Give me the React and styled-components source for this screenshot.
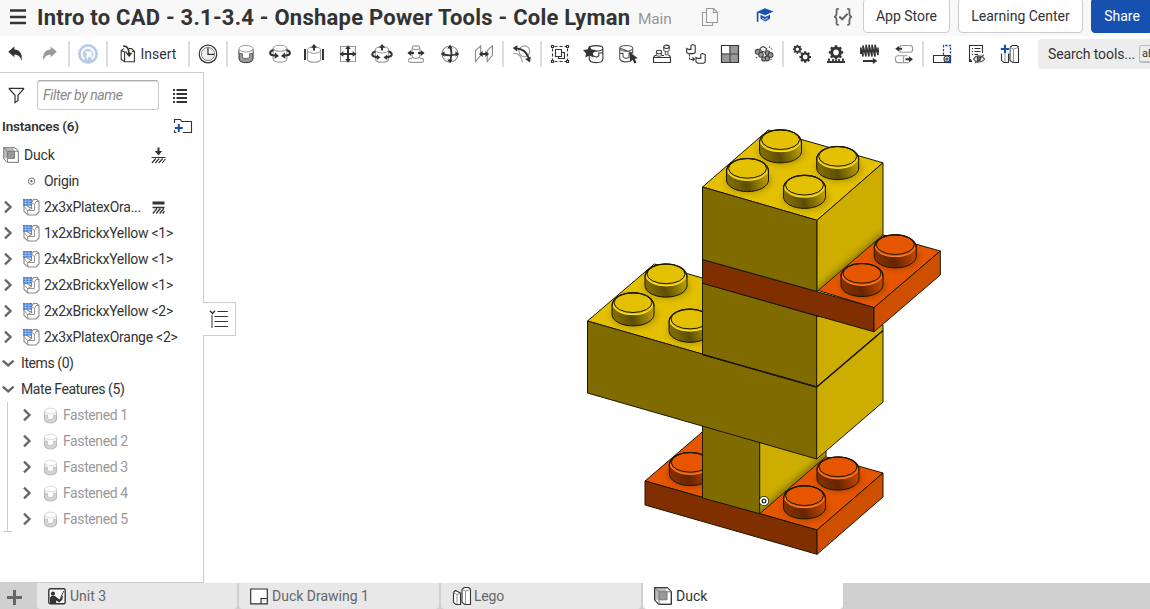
import React from "react";
import styled, { createGlobalStyle } from "styled-components";

const ink = "#333";
const blue = "#1651b0";

const GlobalStyle = createGlobalStyle`
  * { box-sizing: border-box; }
  body { margin: 0; overflow: hidden; background: #fff; }
`;

const Page = styled.div`
  width: 1150px;
  height: 609px;
  display: flex;
  flex-direction: column;
  overflow: hidden;
  background: #fff;
  color: ${ink};
  font-family: Roboto, "Liberation Sans", sans-serif;
  font-size: 14px;
`;

const Label = styled.span`
  white-space: pre;
  letter-spacing: ${(p) => p.$ls || 0}px;
  line-height: 20px;
`;

const Svg = styled.svg`
  display: block;
  flex: none;
  overflow: visible;
`;

/* ---------- header ---------- */
const Header = styled.header`
  display: flex;
  height: 36px;
  flex: none;
  background: #f8f8f8;
  padding-left: 10px;
`;
const MenuButton = styled.div`
  width: 27px;
  flex: none;
  padding-top: 9px;
`;
const Title = styled.h1`
  margin: 0;
  width: 601px;
  flex: none;
  white-space: pre;
  font-size: 22px;
  font-weight: 700;
  line-height: 35px;
  letter-spacing: ${(p) => p.$ls}px;
`;
const Branch = styled.div`
  width: 63px;
  flex: none;
  color: #999;
  font-size: 15.5px;
  line-height: 39px;
  letter-spacing: -0.2px;
`;
const HeaderIcon = styled.div`
  width: ${(p) => p.$w}px;
  flex: none;
  padding-top: 7px;
`;
const HeaderButton = styled.button`
  flex: none;
  width: ${(p) => p.$w}px;
  height: 35px;
  margin: -2px 8px 0 0;
  padding: 1px 0 0;
  border: 1px solid ${(p) => (p.$primary ? blue : "#ccc")};
  border-radius: 4px;
  background: ${(p) => (p.$primary ? blue : "#fff")};
  color: ${(p) => (p.$primary ? "#fff" : ink)};
  font: inherit;
  letter-spacing: ${(p) => p.$ls || 0}px;
  text-align: center;
`;

/* ---------- toolbar ---------- */
const Toolbar = styled.div`
  display: flex;
  align-items: center;
  height: 36px;
  flex: none;
`;
const Tool = styled.div`
  width: ${(p) => p.$w || 34}px;
  padding-left: ${(p) => p.$pl || 0}px;
  flex: none;
  display: flex;
  justify-content: center;
  align-items: center;
  gap: 5px;
`;
const Divider = styled.div`
  width: 2px;
  height: 26px;
  margin: 0 1px;
  flex: none;
  background: #ddd;
`;
const Search = styled.div`
  display: flex;
  align-items: center;
  gap: 4px;
  width: 130px;
  height: 30px;
  margin-left: 11px;
  padding-left: 10px;
  flex: none;
  border-radius: 4px;
  background: #ededed;
`;
const Key = styled.span`
  flex: none;
  width: 40px;
  height: 18px;
  padding-left: 2px;
  border: 1px solid #bbb;
  border-bottom-width: 2px;
  border-radius: 3px;
  font-size: 11px;
  line-height: 16px;
`;

/* ---------- body ---------- */
const Body = styled.div`
  display: flex;
  height: 511px;
  flex: none;
`;
const Panel = styled.aside`
  position: relative;
  width: 204px;
  flex: none;
  border: 1px solid #ccc;
  border-left: 0;
`;
const FilterRow = styled.div`
  display: flex;
  align-items: center;
  height: 44px;
  padding-left: 8px;
`;
const FilterInput = styled.div`
  width: 122px;
  height: 30px;
  margin: 0 13px 0 12px;
  padding: 0 5px;
  border: 1px solid #ccc;
  border-top-color: #aaa;
  border-radius: 3px;
  box-shadow: inset 0 1px 1px #ddd;
  color: #888;
  font-style: italic;
  line-height: 29px;
  letter-spacing: ${(p) => p.$ls}px;
`;
const GroupHeading = styled.div`
  display: flex;
  justify-content: space-between;
  height: 25px;
  padding: 0 11px 8px 2px;
  align-items: center;
  font-weight: 600;
  font-size: 13.5px;
`;
const Row = styled.div`
  display: flex;
  align-items: center;
  height: 26px;
  padding-left: ${(p) => p.$indent}px;
  color: ${(p) => (p.$muted ? "#999" : ink)};
`;
const Slot = styled.div`
  width: ${(p) => p.$w}px;
  flex: none;
`;
const MateList = styled.div`
  position: relative;
  height: 130px;
  &::before {
    content: "";
    position: absolute;
    left: 7px;
    top: 0;
    width: 1px;
    height: 130px;
    background: #ccc;
  }
  &::after {
    content: "";
    position: absolute;
    left: 3px;
    top: 129px;
    width: 9px;
    height: 1px;
    background: #ccc;
  }
`;
const PanelToggle = styled.div`
  position: absolute;
  left: 203px;
  top: 229px;
  width: 33px;
  height: 34px;
  border: 1px solid #ccc;
  border-left: 0;
  background: #fff;
  padding: 6px 0 0 6px;
`;
const Viewport = styled.main`
  flex: 1;
  padding: 48px 0 0 376px;
`;

/* ---------- tabs ---------- */
const Tabs = styled.footer`
  display: flex;
  height: 26px;
  flex: none;
  background: #d0d0d0;
`;
const AddTab = styled.div`
  width: 37px;
  flex: none;
  padding: 7px 0 0 7px;
`;
const Tab = styled.div`
  display: flex;
  align-items: center;
  gap: ${(p) => p.$gap || 4}px;
  width: 200px;
  margin-right: 2px;
  padding-left: 11px;
  flex: none;
  border-radius: 0 0 4px 4px;
  background: ${(p) => (p.$active ? "#fff" : "#e8e8e8")};
  color: ${(p) => (p.$active ? ink : "#666")};
`;

/* ---------- icons ---------- */
const Icon = ({ children, w = 20, h = 20, c = ink, sw = 1.1 }) => (
  <Svg width={w} height={h} viewBox={`0 0 ${w} ${h}`} fill="none" stroke={c} strokeWidth={sw}>
    {children}
  </Svg>
);

const Undo = ({ flip, c = ink }) => (
  <Icon>
    <path
      transform={flip ? "translate(20 0) scale(-1 1)" : undefined}
      d="M3.2 7.7 9.4 2.6V5.6C14.6 5.9 17.6 9.3 16.6 16.8 15.4 12.3 13 10.6 9.4 10.4V13.2Z"
      fill={c}
      stroke="none"
    />
  </Icon>
);
const Sync = () => (
  <Icon>
    <circle cx="10" cy="10" r="10" fill="#b9cde8" stroke="none" />
    <path d="M6.4 15.2A6.3 6.3 0 1 1 13.8 15.1" stroke="#fff" strokeWidth="1.8" />
    <path d="M6.6 7.4 13.8 7.6 13.6 14.6 11.3 12.2C10 13 9.6 14 9.4 16 7.9 13.6 8.2 11.4 9 9.9Z" fill="#fff" stroke="none" />
  </Icon>
);
const InsertIcon = () => (
  <Icon w={16} h={18}>
    <path d="M4 3.6 1.2 5.6V14.4L4.6 16.8H14.4V6.4L11.6 3.6H9M1.2 5.6 4.6 7V16.8M4.6 7H7" />
    <path d="M14.4 6.4H12" />
    <path d="M3.2 1.2C7.6 1 8.8 3.4 9 9" strokeWidth="1.7" />
    <path d="M5.6 7.8H12.4L9.2 12.2Z" fill={ink} stroke="none" />
  </Icon>
);
const Clock = () => (
  <Icon>
    <circle cx="10" cy="10" r="8.8" strokeWidth="1.2" />
    <circle cx="10" cy="10" r="6.6" fill="#eee" stroke="#777" strokeWidth=".9" />
    <path d="M10 3.8V10.4H16.2" fill="#fff" strokeWidth="1.3" />
  </Icon>
);
const Fasten = ({ s = 20, faint }) => (
  <Svg width={s} height={s} viewBox="0 0 20 20" fill="none" stroke={ink} opacity={faint ? 0.42 : 1}>
    <path d="M3 7V14.8C3 20 17 20 17 14.8V7L14 9.6C13 10 13.6 13.4 12 13.6H8C6.6 13.4 7 10 6 9.6Z" fill="#999" stroke="#333" />
    <path d="M3 5V9.6H6.3V13.4C8 15 12 15 13.7 13.4V9.6H17V5" fill="#fff" stroke="#666" />
    <ellipse cx="10" cy="4.7" rx="7" ry="3.3" fill="#fff" stroke="#999" />
  </Svg>
);
const AU = "M10 0 6.9 3.8H9V6.4H11V3.8H13.1Z";
const Revolute = () => (
  <Icon c="#999">
    <ellipse cx="10" cy="4.3" rx="6.8" ry="3" />
    <path d="M3.2 4.3V15.2C4 19.2 16 19.2 16.8 15.2V4.3" />
    <path d="M3.4 6C-1 7.4-.8 10.6 3 11.2L6 11.6M16.6 6C21 7.4 20.8 10.6 17 11.2L14 11.6" stroke={ink} strokeWidth="2" />
    <path d="M5 8.5 9 11.9 4.6 14.7ZM15 8.5 11 11.9 15.4 14.7Z" fill={ink} stroke="none" />
  </Icon>
);
const Slider = () => (
  <Icon c="#999">
    <ellipse cx="10" cy="6" rx="6.6" ry="3.2" />
    <path d="M3.4 6V15.3C4.2 19.2 15.8 19.2 16.6 15.3V6" />
    <path d={AU} fill={ink} stroke="none" />
    <path d="M1 5V16M19 5V16" stroke={ink} strokeWidth="2" />
  </Icon>
);
const Planar = () => (
  <Icon c="#999">
    <path d="M2.5 2.5H17.5V17.5H2.5Z" />
    <path d="M10 3V17M3 10H17" stroke={ink} strokeWidth="2" />
    <path d="M10 1.2 7.2 5H12.8ZM10 18.8 7.2 15H12.8ZM1.4 10 5.4 7.2V12.8ZM18.6 10 14.6 7.2V12.8Z" fill={ink} stroke="none" />
  </Icon>
);
const Cylindrical = () => (
  <Icon c="#999">
    <ellipse cx="10" cy="5.8" rx="6.6" ry="3.2" />
    <path d="M3.4 6V15.3C4.2 19.2 15.8 19.2 16.6 15.3V6" />
    <path d={AU} fill={ink} stroke="none" />
    <path d="M3.4 7.5C-.7 8.6-.7 12 3 12.8L6 13.2M16.6 7.5C20.7 8.6 20.7 12 17 12.8L14 13.2" stroke={ink} strokeWidth="2" />
    <path d="M4.8 10.4 8.6 13.5 4.6 16ZM15.2 10.4 11.4 13.5 15.4 16Z" fill={ink} stroke="none" />
  </Icon>
);
const PinSlot = () => (
  <Icon c="#999">
    <ellipse cx="10" cy="3.8" rx="3.8" ry="1.9" />
    <path d="M6.2 4V12.6C7 15 13 15 13.8 12.6V4M6.2 14.4H4C1.8 14.8 1.8 18.4 4.4 18.4H15.6C18.4 18.4 18.4 14.8 15.8 14.4H13.8" />
    <path d="M4 9H8M12 9H16" stroke={ink} strokeWidth="2" />
    <path d="M1.3 9 5.2 6V12ZM18.7 9 14.8 6V12Z" fill={ink} stroke="none" />
  </Icon>
);
const Ball = () => (
  <Icon c="#888">
    <circle cx="10" cy="10" r="8" />
    <path d="M10 3C12 7 11.4 13 10 17M3 10.2C7 11.6 13 11.6 17 10" stroke={ink} strokeWidth="1.8" />
    <path d="M10 .8 7.2 4.4H12.8ZM10 19.2 7.2 15.6H12.8ZM.8 10 4.5 7.2V12.8ZM19.2 10 15.5 7.2V12.8Z" fill={ink} stroke="none" />
  </Icon>
);
const Parallel = () => (
  <Icon c="#888">
    <path d="M1.5 6.7 6.7 1.8V11.4L1.5 17.5ZM13.2 6.7 18.4 1.8V11.4L13.2 17.5Z" />
    <path d="M7 10H13" stroke={ink} strokeWidth="2" />
    <path d="M4.9 10 8.7 6.9V13.1ZM15.1 10 11.3 6.9V13.1Z" fill={ink} stroke="none" />
  </Icon>
);
const Tangent = () => (
  <Icon c="#999">
    <circle cx="12.4" cy="7.3" r="5.4" />
    <path d="M1 9C7 9.4 10 12.4 10.4 18.4" />
    <path d="M4 4.6C10 4.5 14.6 8.5 16.8 14" stroke={ink} strokeWidth="2" />
    <path d="M.7 4 5.4 1.2 5.1 7.4ZM18 18.4 13.1 14.9 18.8 12.8Z" fill={ink} stroke="none" />
  </Icon>
);
const Group = () => (
  <Icon>
    <path d="M4.5 2.5H16M4.5 17.5H16M2.5 4.5V16M17.5 4.5V16" strokeDasharray="3 2" />
    <path d="M1.5 1.5h2v2h-2zM16.5 1.5h2v2h-2zM1.5 16.5h2v2h-2zM16.5 16.5h2v2h-2z" fill="#fff" />
    <path d="M5.5 5.5H11.5V12.5H5.5Z" />
    <path d="M11.5 8.5H14.5V14.5H8.5V12.5" />
  </Icon>
);
const StarCylinder = () => (
  <Icon>
    <path d="M5.3 4V15.2C6 19.7 18.3 19.7 18.9 15.2V4C18.3.8 6 .8 5.3 4ZM5.3 5C8 7.8 16.4 7.8 18.9 5M18.5 9H14.8V11.8L12.6 13.2 9 11.8" fill="#fff" />
    <path d="M5.4 1.4 7.4 5.4 12 6 8.9 9.2 9.6 13.6 5.4 11.5 1.3 13.6 2 9.2-1 6 3.5 5.4Z" fill={ink} stroke="none" />
  </Icon>
);
const SelectCylinder = () => (
  <Icon c="#555">
    <path d="M1.7 4V14.4C2.4 18 8 18.6 12 17M14.7 9V4C14 .6 2.4.6 1.7 4ZM1.7 5C4 7.8 12.4 7.8 14.7 5M1.7 9.4H5V12.6C6.4 14.4 9 14.6 11 13.6V9.4H14" />
    <path d="M11.3 7.8 19.8 14.2 16.7 14.9 18.6 18.4 16.4 19.4 14.5 15.8 12.2 18.2Z" fill={ink} stroke="none" />
  </Icon>
);
const MateConnector = () => (
  <Icon>
    <path d="M4.6 11.5H3L1.5 13.5V18.5H18.5V13.5L17.4 11.5H16.4M9.6 11.5H12M1.5 13.5H18.5" />
    <ellipse cx="7" cy="8" rx="2.6" ry="1.8" />
    <path d="M4.4 8V11C5 12.6 9 12.6 9.6 11V8M11.7 3V6.3C12.6 8.2 16.3 8.2 17.3 6.3V3M13.3 8V10.8H16V8" stroke="#666" />
    <ellipse cx="14.5" cy="2.8" rx="2.8" ry="1.7" />
  </Icon>
);
const Replicate = () => (
  <Icon>
    <path d="M.7 4.4 2.7 5.4H5V1.3L6.6.6 9.2 1.6V8.5L7.7 9.6H2.4L.7 8.4ZM10 13.4 12 14.4H14.8V10.3L16.4 9.6 19.2 10.6V18L17.7 19.3H11.8L10 18Z" />
    <path d="M3.5 10.5V15.5H8" strokeDasharray="2 1" />
    <path d="M6.5 12.8 9.3 15.3 6.5 17.6Z" fill={ink} stroke="none" />
  </Icon>
);
const PatternGrid = () => (
  <Icon>
    <path d="M1.5 1.5H18.5V18.5H1.5Z" fill="#999" />
    <path d="M2 2H9.5V9.5H2Z" fill="#fff" stroke="none" />
    <path d="M10 1.5V18.5M1.5 10H18.5" stroke="#444" />
    <path d="M1.5 1.5H18.5V18.5H1.5Z" />
  </Icon>
);
const PatternCircle = () => (
  <Icon c="#444">
    <g fill="#999">
      <circle cx="3.7" cy="7.8" r="2.4" /><circle cx="7" cy="10.8" r="2.4" />
      <circle cx="13" cy="14.5" r="2.4" /><circle cx="9.7" cy="15" r="2" />
      <circle cx="13.6" cy="9" r="2.3" /><circle cx="16.5" cy="11" r="2.4" />
    </g>
    <path d="M6 4.5 9 2.4 12.6 4.4 11.5 8.3 7.6 7.2Z" fill="#fff" />
    <path d="M2 13 4 15.4M15 2.5 18 5.4M16.5 16 18.6 14" strokeDasharray="1.5 1.5" />
  </Icon>
);
const gear = (cx, cy, r, n) =>
  Array.from({ length: n }, (_, i) => {
    const a = (i * 2 * Math.PI) / n;
    return (
      <line key={i} x1={cx + Math.cos(a) * r} y1={cy + Math.sin(a) * r} x2={cx + Math.cos(a) * (r + 2)} y2={cy + Math.sin(a) * (r + 2)} />
    );
  });
const Gears = () => (
  <Icon>
    <circle cx="5.4" cy="5.3" r="2.6" strokeWidth="1.7" />
    <g strokeWidth="1.7">{gear(5.4, 5.3, 2.5, 8)}</g>
    <circle cx="13.2" cy="13" r="3.5" strokeWidth="2.2" />
    <g strokeWidth="2.2">{gear(13.2, 13, 3.8, 8)}</g>
  </Icon>
);
const RackPinion = () => (
  <Icon>
    <circle cx="10" cy="8.4" r="4.3" strokeWidth="3" />
    <g strokeWidth="2.5">{gear(10, 8.4, 5.2, 8)}</g>
    <path d="M1 18H19" strokeWidth="2" />
    <path d="M3 17V14.5M7 17V15M10 17V16M13 17V15M17 17V14.5" strokeWidth="1.8" />
  </Icon>
);
const Screw = () => (
  <Icon>
    <path d="M.8 10V3.5L3 12.6V1.5L6 12.6V.8L9 12.6V.8L12 12.6V.8L15 12.6V.8L18 11V3.5M.5 7H19" strokeWidth="1.5" />
    <path d="M3 17H14" strokeWidth="2" />
    <path d="M12.8 13.8 17.3 17 12.8 20Z" fill={ink} stroke="none" />
  </Icon>
);
const Linear = () => (
  <Icon c="#999">
    <path d="M7 1.5H16.3C19.5 1.8 19.5 8 16.3 8.3H5.5M7 1.5C5 2 5 7.8 7 8.3M13.5 11.8H3.5C.7 12.2.7 18.2 3.5 18.6H14.5M10.5 11.8C8.8 13 8.8 17.4 10.5 18.6" />
    <path d="M4 4.8H8M11.5 15.2H16" stroke={ink} strokeWidth="2" />
    <path d="M1.2 4.8 5 2V7.6ZM19 15.2 15 12.2V18.2Z" fill={ink} stroke="none" />
  </Icon>
);
const Section = () => (
  <Icon>
    <path d="M1.5 11.5H18.5V18.5H1.5Z" />
    <path d="M11.5 11V1.5H18.5V18.5H14" stroke={blue} strokeWidth="1.3" strokeDasharray="2.4 1.3" />
    <circle cx="15" cy="15" r="3" />
    <circle cx="15" cy="15" r="1" />
  </Icon>
);
const HiddenList = () => (
  <Icon>
    <path d="M6 17.5H3.5V1.5H16.5V9M3.5 15 6 17.5" />
    <path d="M6 4.5H7M8.5 4.5H14.5M6 7.5H7M8.5 7.5H14.5M6 10.5H7M8.5 10.5H12" />
    <path d="M7.6 15C10 10.8 16 10.8 18.6 15 16 19 10 19 7.6 15ZM9 19 18 10.7M11 19 16 12" stroke="#555" />
    <circle cx="13" cy="14.8" r="1.8" fill="#777" />
  </Icon>
);
const Books = ({ plus }) => (
  <Icon c={ink}>
    <path d="M1.5 6.5 3.5 4.5 8.5 7V18.5H4L1.5 16.6ZM10 3.5 12.2 1.5H16.6L18.5 3V18.5H13L10 16.5Z" fill="#fff" />
    <path d="M1.5 6.5 5 8.5V18M5 8.5 8.5 7.2M10 3.5 13.5 5 18.5 3.5M13.5 5V18.2" stroke="#888" strokeWidth=".9" />
    {plus && (
      <>
        <path d="M0 0H9.5V9.5H0Z" fill="#fff" stroke="none" />
        <path d="M5 .8V9.2M.8 5H9.2" stroke={blue} strokeWidth="2.2" />
      </>
    )}
  </Icon>
);
const CapIcon = () => (
  <Icon w={18} h={18} c={blue}>
    <path d="M8.8 1.3 17.5 4.5 9.2 8.3.6 4.9Z" fill={blue} stroke="none" />
    <path d="M1.6 5V14.8" strokeWidth="1.7" />
    <path d="M4.5 7.8 9.2 10 14 7.8V11.7L9.3 14.6 4.5 11.7Z" fill={blue} stroke="none" />
    <path d="M6 11.2 9 12.5 12 11" stroke="#f8f8f8" strokeWidth=".8" />
  </Icon>
);
const Copy = () => (
  <Icon w={18} h={20} c="#999">
    <path d="M5.5 5.5H1.5V18.5H11.5V15.5M5.5 1.5H12.6L16.5 5.3V15.5H5.5ZM12.5 1.6V5.5H16.4" />
  </Icon>
);
const Braces = () => (
  <Icon w={20} h={20} c="#666" sw={1.8}>
    <path d="M5.8 1.9H4.8C3.2 1.9 3.6 3.3 3.6 5.8S3 9.8 1 9.8C3 9.8 3.6 11.2 3.6 13.7S3.2 17.8 4.8 17.8H5.8M14.2 1.9H15.2C16.8 1.9 16.4 3.3 16.4 5.8S17 9.8 19 9.8C17 9.8 16.4 11.2 16.4 13.7S16.8 17.8 15.2 17.8H14.2" />
    <path d="M6.3 9.5 9.2 12.3 14.6 6.8" strokeWidth="2" />
  </Icon>
);
const Funnel = () => (
  <Icon w={17} h={18}>
    <path d="M1.3 2.3H15.6V3L10 9.3V14.5L7 16.6V9.3L1.3 3Z" strokeWidth="1.2" />
  </Icon>
);
const ListIcon = () => (
  <Icon w={15} h={15}>
    <path d="M1 2H3M4.5 2H15M1 6H3M4.5 6H15M1 10H3M4.5 10H15M1 14H3M4.5 14H15" strokeWidth="2" />
  </Icon>
);
const FolderPlus = () => (
  <Icon w={18} h={15}>
    <path d="M.5 5V1.5H6.5L7.6 3.5H17.5V14.5H8.8M.5 12V14.5H2.4" />
    <path d="M4.8 6V14M.8 10H8.8" stroke={blue} strokeWidth="2" />
  </Icon>
);
const Cube = ({ s = 18, c = "#888" }) => (
  <Svg width={s} height={s} viewBox="0 0 18 18" fill="none" stroke={c}>
    <path d="M.7 .7H13.3L17.3 4.5V17.3H4.7L.7 13Z" fill="#fff" />
    <path d="M1 1H11.7L13 5V12.5H5L1 13Z" fill="#bbb" stroke="none" />
    <path d="M5 4.8H13V12.8H5Z" fill="#999" stroke="#777" />
    <path d="M.7 .7 5 4.8M5 12.8V17M13 4.8H17" stroke="#777" />
    <path d="M.7 .7H13.3L17.3 4.5V17.3H4.7L.7 13Z" />
  </Svg>
);
const Part = () => (
  <Icon w={17} h={17} c="#8a8a8a">
    <path d="M8.5 3.5 10.5 .5H14L16 2.5V13L13 16H5L1 12.5V6.5H4L8.5 9.5Z" fill="#fff" />
    <path d="M8.5 3.5V9.5L4.5 11.5 1 7.5M4.5 11.5H11.5V5.5L8.5 3.5M11.5 5.5 13 2.5H16M4.5 11.5 5 16" strokeWidth=".9" />
    <path d="M0 0H9V6.6H0Z" fill="#3f7bd6" stroke="none" />
    <path d="M0 2.2H9M0 4.6H9M2.8 0V6.6M5.9 0V6.6" stroke="#a9c6f0" strokeWidth=".8" />
  </Icon>
);
const Ground = ({ arrow }) => (
  <Icon w={15} h={17}>
    {arrow ? (
      <>
        <path d="M7.5 .5V6" strokeWidth="2" />
        <path d="M3.8 4H11.2L7.5 8.4Z" fill={ink} stroke="none" />
        <path d="M.5 10.5H14.5M1 16 4.8 11.5M4.4 16 8.2 11.5M7.8 16 11.6 11.5M11.2 16 14.4 12" strokeWidth="1.2" />
      </>
    ) : (
      <>
        <path d="M1.5 4H13.5" strokeWidth="3" />
        <path d="M1.5 8.5H13.5M1.8 14.5 6 9.5M5.2 14.5 9.4 9.5M8.6 14.5 12.8 9.5M11.6 14.5 13.5 12.2" strokeWidth="1.3" />
      </>
    )}
  </Icon>
);
const Origin = () => (
  <Icon w={9} h={9} c="#777" sw={1}>
    <circle cx="4.5" cy="4.2" r="3.2" />
    <circle cx="4.5" cy="4.2" r="1.1" fill="#555" stroke="none" />
  </Icon>
);
const Chevron = ({ down }) => (
  <Icon w={12} h={12} c="#666" sw={2.3}>
    <path d={down ? "M.8 3.6 6.2 8.4 11.6 3.6" : "M3 .6 8.5 6 3 11.4"} />
  </Icon>
);
const TreeIcon = () => (
  <Icon w={20} h={20}>
    <path d="M8.5 2.5H18.8M5.5 7.5H18.8M5.5 12.5H18.8M5.5 17.5H18.8" />
    <path d="M3 6V19" stroke="#999" strokeWidth="2" />
    <path d="M1 1.8 3.5 4.4 6 1.8" strokeWidth="1.4" />
  </Icon>
);
const Presenter = () => (
  <Icon w={18} h={17}>
    <rect x=".8" y=".8" width="16.4" height="15" rx="1.5" fill="#fff" strokeWidth="1.4" />
    <circle cx="5" cy="5.7" r="2.1" fill={ink} stroke="none" />
    <path d="M2 15.5V9.5L3.5 8H7L11.4 11.5 15 7 14.4 11.4 11.5 14.4 8.2 12.4V15.5Z" fill={ink} stroke="none" />
    <path d="M12.6 9.6 15.8 3" strokeWidth=".9" />
  </Icon>
);
const DrawingIcon = () => (
  <Icon w={18} h={17}>
    <path d="M.7 1H17.3V15.8H.7ZM17.3 10.5H11V15.8" fill="#fff" strokeWidth="1.2" />
  </Icon>
);

/* ---------- model ---------- */
const palette = {
  y: { top: "#e3c000", left: "#806b00", right: "#ccad00", hi: "#fff03c", lo: "#5c4d00", wall: "#b89b00" },
  o: { top: "#e65600", left: "#803000", right: "#cf4f00", hi: "#ff9440", lo: "#672400", wall: "#bf4700" },
};

const Stud = ({ x, y, k }) => {
  const p = palette[k];
  return (
    <g>
      <ellipse cx={x + 1} cy={y + 23} rx="23" ry="12.5" fill={p.lo} stroke="none" opacity=".35" filter="url(#soft)" />
      <path
        d={`M${x - 21} ${y + 13}V${y + 22}A21 11.6 0 0 0 ${x + 21} ${y + 22}V${y + 13}A21 12.6 0 0 0 ${x - 21} ${y + 13}Z`}
        fill={`url(#wall-${k})`}
      />
      <ellipse cx={x} cy={y + 11.8} rx="20.5" ry="11" fill={p.top} stroke="none" />
      <path d={`M${x - 20.2} ${y + 11.6}A20.2 10.8 0 0 0 ${x + 20.2} ${y + 11.6}`} fill="none" stroke={p.hi} strokeWidth="1" opacity=".8" />
      <ellipse cx={x} cy={y + 10.4} rx="19" ry="9.8" fill={p.top} />
      <path d={`M${x - 21} ${y + 14}C${x - 21} ${y - 4} ${x + 21} ${y - 4} ${x + 21} ${y + 14}`} fill="none" strokeWidth="1.2" />
    </g>
  );
};
const Face = ({ pts, fill }) => <polygon points={pts} fill={fill} />;

const DuckModel = () => {
  const { y, o } = palette;
  return (
    <Svg width="370" height="440" viewBox="580 120 370 440" stroke="#1a1600" strokeWidth="1" strokeLinejoin="round">
      <defs>
        <filter id="soft" x="-30%" y="-30%" width="160%" height="160%" colorInterpolationFilters="sRGB">
          <feGaussianBlur stdDeviation="3" />
        </filter>
        {["y", "o"].map((k) => (
          <linearGradient key={k} id={`wall-${k}`} x1="0" x2="1" y1=".2" y2="0">
            <stop offset="0" stopColor={palette[k].left} />
            <stop offset=".35" stopColor={palette[k].lo} />
            <stop offset=".85" stopColor={palette[k].wall} />
            <stop offset="1" stopColor={palette[k].wall} />
          </linearGradient>
        ))}
        <clipPath id="left-of-body"><path d="M580 240H702.5V500H580Z" /></clipPath>
        <clipPath id="head-side"><path d="M817 220.5 883 163V235L817 291.5Z" /></clipPath>
        <clipPath id="foot-side"><path d="M759.7 442 817 459 826 451V456.5L759.7 513.5Z" /></clipPath>
      </defs>

      <Face pts="645,481 711,424.5 883,473 817,530" fill={o.top} />
      <Face pts="645,481 817,530 817,554.3 645,505" fill={o.left} />
      <Face pts="817,530 883,473 883,497 817,554.3" fill={o.right} />
      <g clipPath="url(#left-of-body)"><Stud x={690.3} y={452} k="o" /></g>
      <Face pts="702.5,425 759.7,441 759.7,513.7 702.5,498" fill={y.left} />
      <Face pts="759.7,441 826,451 826,456.5 759.7,513.7" fill={y.right} />
      <g clipPath="url(#foot-side)">
        <path d="M759 516 830 455" stroke={y.lo} strokeWidth="9" opacity=".6" filter="url(#soft)" />
      </g>
      <Stud x={838} y={456.5} k="o" />
      <Stud x={804.5} y={485.3} k="o" />

      <Face pts="587.5,321 654.3,264 740,289 740,365" fill={y.top} />
      <g clipPath="url(#left-of-body)">
        <Stud x={666} y={263.5} k="y" />
        <Stud x={633} y={292.3} k="y" />
        <Stud x={690} y={308.7} k="y" />
      </g>
      <Face pts="587.5,321 816.7,387 816.7,459 587.5,393" fill={y.left} />
      <Face pts="816.7,387 883,330 883,402 816.7,459" fill={y.right} />
      <Face pts="702.5,283 816.7,316 816.7,387 702.5,354.5" fill={y.left} />
      <Face pts="816.7,316 883,325 883,330.3 816.7,387" fill={y.right} />
      <path d="M702.5 354.5 816.7 387 883 330.5" fill="none" strokeWidth="1.6" />

      <Face pts="768,275 883.3,235 940.3,251 874,307.6" fill={o.top} />
      <Face pts="702.5,259.5 874,307.6 874,331.8 702.5,283.3" fill={o.left} />
      <Face pts="874,307.6 940.3,251 940.3,275 874,331.8" fill={o.right} />
      <Stud x={895.3} y={234.3} k="o" />
      <Stud x={862} y={263} k="o" />

      <Face pts="702.5,187 768.3,130 883,162.8 817,220.3" fill={y.top} />
      <Face pts="702.5,187 817,220.3 817,291.5 702.5,259.5" fill={y.left} />
      <Face pts="817,220.3 883,162.8 883,235 817,291.5" fill={y.right} />
      <g clipPath="url(#head-side)">
        <path d="M815 296 885 236" stroke={y.lo} strokeWidth="9" opacity=".6" filter="url(#soft)" />
      </g>
      <Stud x={780.5} y={129.3} k="y" />
      <Stud x={837.7} y={146} k="y" />
      <Stud x={747.5} y={158} k="y" />
      <Stud x={804.5} y={174.8} k="y" />

      <circle cx="764" cy="501" r="5" fill="#222" stroke="none" />
      <circle cx="764" cy="501" r="3.4" fill="#222" stroke="#fff" strokeWidth="1.8" />
      <circle cx="764" cy="501" r="1.2" fill="#fff" stroke="none" />
    </Svg>
  );
};

const mateTools = [Fasten, Revolute, Slider, Planar, Cylindrical, PinSlot, Ball, Parallel];
const assemblyTools = [Group, StarCylinder, SelectCylinder, MateConnector, Replicate, PatternGrid, PatternCircle];
const relationTools = [Gears, RackPinion, Screw, Linear];
const renderTools = (list) => list.map((I, i) => <Tool key={i}><I /></Tool>);

const instances = [
  ["2x3xPlatexOra...", true],
  ["1x2xBrickxYellow <1>"],
  ["2x4xBrickxYellow <1>"],
  ["2x2xBrickxYellow <1>"],
  ["2x2xBrickxYellow <2>"],
  ["2x3xPlatexOrange <2>"],
];

export default function App() {
  return (
    <Page>
      <GlobalStyle />
      <Header>
        <MenuButton>
          <Icon w={16} h={16}><path d="M0 1.5H16M0 8H16M0 14H16" strokeWidth="2.6" /></Icon>
        </MenuButton>
        <Title $ls={0.24}>Intro to CAD - 3.1-3.4 - Onshape Power Tools - Cole Lyman</Title>
        <Branch>Main</Branch>
        <HeaderIcon $w={55}><Copy /></HeaderIcon>
        <HeaderIcon $w={77}><CapIcon /></HeaderIcon>
        <HeaderIcon $w={30}><Braces /></HeaderIcon>
        <HeaderButton $w={87}>App Store</HeaderButton>
        <HeaderButton $w={125}>Learning Center</HeaderButton>
        <HeaderButton $w={62} $primary>Share</HeaderButton>
      </Header>

      <Toolbar>
        <Tool $w={30}><Undo /></Tool>
        <Tool $w={37} $pl={3}><Undo flip c="#999" /></Tool>
        <Divider />
        <Tool $w={34}><Sync /></Tool>
        <Divider />
        <Tool $w={78}><InsertIcon /><Label>Insert</Label></Tool>
        <Divider />
        <Tool><Clock /></Tool>
        <Divider />
        {renderTools(mateTools)}
        <Divider />
        <Tool><Tangent /></Tool>
        <Divider />
        {renderTools(assemblyTools)}
        <Divider />
        {renderTools(relationTools)}
        <Divider />
        <Tool><Section /></Tool>
        <Tool><HiddenList /></Tool>
        <Tool><Books plus /></Tool>
        <Search><Label $ls={-0.1}>Search tools...</Label><Key>alt</Key></Search>
      </Toolbar>

      <Body>
        <Panel>
          <FilterRow>
            <Funnel />
            <FilterInput $ls={-0.4}>Filter by name</FilterInput>
            <ListIcon />
          </FilterRow>
          <GroupHeading><Label $ls={-0.2}>Instances (6)</Label><FolderPlus /></GroupHeading>
          <Row $indent={3}>
            <Slot $w={21}><Cube s={16} /></Slot>
            <Slot $w={127}><Label $ls={-0.2}>Duck</Label></Slot>
            <Ground arrow />
          </Row>
          <Row $indent={27}><Slot $w={17}><Origin /></Slot><Label $ls={-0.3}>Origin</Label></Row>
          {instances.map(([name, fixed]) => (
            <Row key={name} $indent={2}>
              <Slot $w={21}><Chevron /></Slot>
              <Slot $w={21}><Part /></Slot>
              <Slot $w={107}><Label $ls={-0.27}>{name}</Label></Slot>
              {fixed && <Ground />}
            </Row>
          ))}
          <Row $indent={2}><Slot $w={19}><Chevron down /></Slot><Label $ls={-0.42}>Items (0)</Label></Row>
          <Row $indent={2}><Slot $w={19}><Chevron down /></Slot><Label $ls={-0.42}>Mate Features (5)</Label></Row>
          <MateList>
            {[1, 2, 3, 4, 5].map((n) => (
              <Row key={n} $indent={21} $muted>
                <Slot $w={21}><Chevron /></Slot>
                <Slot $w={21}><Fasten s={17} faint /></Slot>
                <Label $ls={-0.4}>{`Fastened ${n}`}</Label>
              </Row>
            ))}
          </MateList>
          <PanelToggle><TreeIcon /></PanelToggle>
        </Panel>
        <Viewport><DuckModel /></Viewport>
      </Body>

      <Tabs>
        <AddTab><Icon w={15} h={15} c="#666" sw={3}><path d="M7.5 0V15M0 7.5H15" /></Icon></AddTab>
        <Tab><Presenter /><Label>Unit 3</Label></Tab>
        <Tab><DrawingIcon /><Label>Duck Drawing 1</Label></Tab>
        <Tab $gap={2}><Books /><Label $ls={-0.2}>Lego</Label></Tab>
        <Tab $active><Cube c={ink} /><Label>Duck</Label></Tab>
      </Tabs>
    </Page>
  );
}
